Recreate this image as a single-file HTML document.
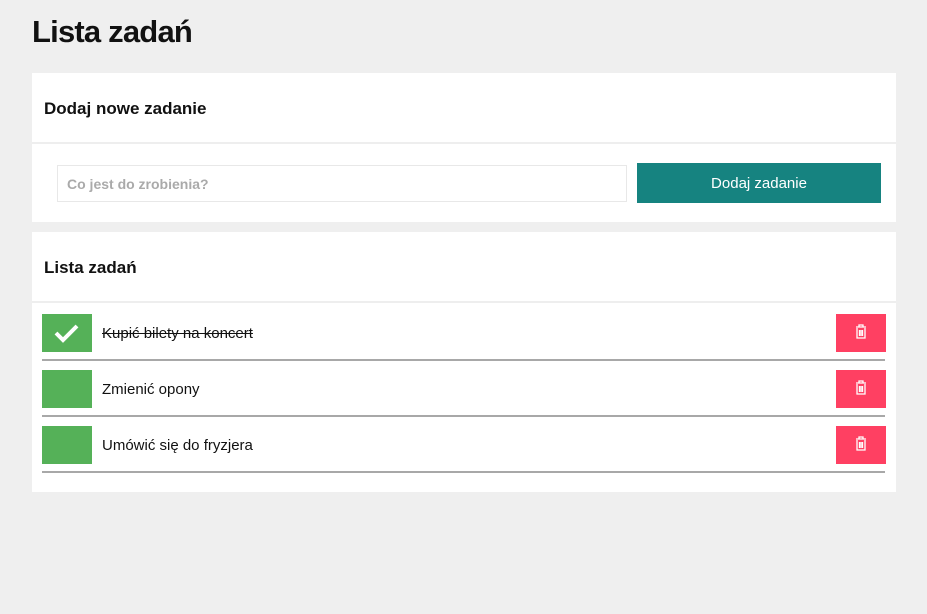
<!DOCTYPE html>
<html><head><meta charset="utf-8"><style>
*{box-sizing:border-box;margin:0;padding:0}
body{width:927px;height:614px;background:#efefef;font-family:"Liberation Sans",sans-serif;color:#111;position:relative;overflow:hidden}
h1{position:absolute;left:32px;top:14px;font-size:31px;font-weight:bold;letter-spacing:-0.8px}
.card{position:absolute;left:32px;width:864px;background:#fff}
.hd{height:71px;border-bottom:2px solid #eee;padding:26px 12px;font-size:17px;font-weight:bold}
.inp{position:absolute;left:25px;top:92px;width:570px;height:37px;border:1px solid #e8e8e8;font-size:14px;color:#aaa;padding:10px 9px;font-weight:bold}
.btn{position:absolute;left:605px;top:90px;width:244px;height:40px;background:#168380;color:#fff;font-size:15px;text-align:center;line-height:42px}
.row{position:absolute;left:10px;width:843px;height:47px;border-bottom:2px solid #a8a8a8}
.cb{position:absolute;left:0;top:0;width:50px;height:38px;background:#55b158}
.tx{position:absolute;left:60px;top:11px;font-size:15px}
.del{position:absolute;left:794px;top:0;width:50px;height:38px;background:#ff4062}
</style></head><body>
<h1>Lista zadań</h1>
<div class="card" style="top:73px;height:149px">
<div class="hd">Dodaj nowe zadanie</div>
<div class="inp">Co jest do zrobienia?</div>
<div class="btn">Dodaj zadanie</div>
</div>
<div class="card" style="top:232px;height:260px">
<div class="hd">Lista zadań</div>
<div class="row" style="top:82px"><div class="cb"><svg width="50" height="38"><path d="M14 19l7 7 14-14" stroke="#fff" stroke-width="4" fill="none"/></svg></div><div class="tx" style="text-decoration:line-through">Kupić bilety na koncert</div><div class="del"><svg width="50" height="38"><g stroke="#fff" stroke-width="1.3" fill="none"><path d="M20 13h10M23 13v-2h4v2M21 14v10h8V14M23.5 16v6M25 16v6M26.5 16v6"/></g></svg></div></div>
<div class="row" style="top:138px"><div class="cb"></div><div class="tx">Zmienić opony</div><div class="del"><svg width="50" height="38"><g stroke="#fff" stroke-width="1.3" fill="none"><path d="M20 13h10M23 13v-2h4v2M21 14v10h8V14M23.5 16v6M25 16v6M26.5 16v6"/></g></svg></div></div>
<div class="row" style="top:194px"><div class="cb"></div><div class="tx">Umówić się do fryzjera</div><div class="del"><svg width="50" height="38"><g stroke="#fff" stroke-width="1.3" fill="none"><path d="M20 13h10M23 13v-2h4v2M21 14v10h8V14M23.5 16v6M25 16v6M26.5 16v6"/></g></svg></div></div>
</div>
</body></html>
